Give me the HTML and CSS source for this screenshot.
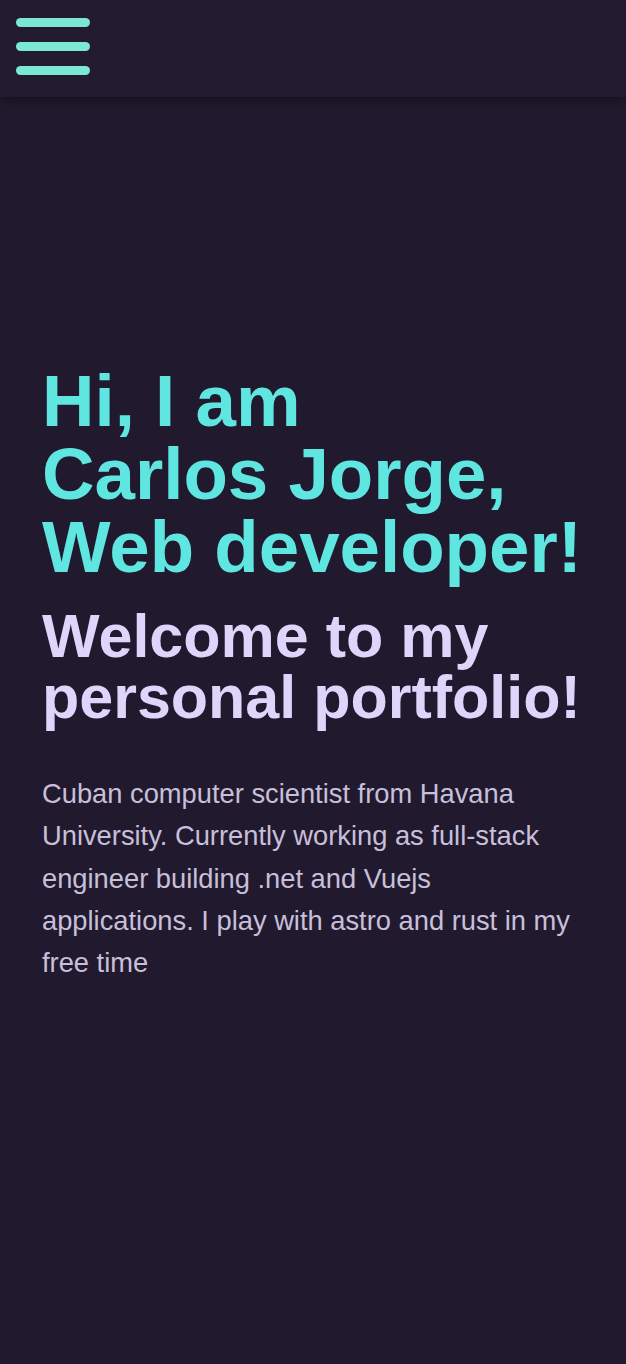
FILE: index.html
```html
<!DOCTYPE html>
<html lang="en">
<head>
<meta charset="utf-8">
<title>Carlos Jorge</title>
<link rel="stylesheet" href="styles.css">
</head>
<body>
<header class="topbar">
  <button class="menu-btn" aria-label="Menu">
    <span class="bar"></span>
    <span class="bar"></span>
    <span class="bar"></span>
  </button>
</header>
<main class="hero">
  <h1 class="title">Hi, I am<br>Carlos Jorge,<br>Web developer!</h1>
  <h2 class="subtitle">Welcome to my personal portfolio!</h2>
  <p class="bio">Cuban computer scientist from Havana University. Currently working as full-stack engineer building .net and Vuejs applications. I play with astro and rust in my free time</p>
</main>
</body>
</html>
```

FILE: styles.css
```css
* { box-sizing: border-box; }
html, body {
  margin: 0;
  padding: 0;
  background: #211a2e;
  font-family: "Liberation Sans", Arial, sans-serif;
}
body { min-height: 1364px; }
.topbar {
  height: 97px;
  background: #221a2e;
  box-shadow: 0 4px 10px rgba(0, 0, 0, 0.35);
  display: flex;
  align-items: flex-start;
  padding: 18px 0 0 16px;
  position: relative;
  z-index: 1;
}
.menu-btn {
  background: none;
  border: 0;
  padding: 0;
  display: flex;
  flex-direction: column;
  gap: 15px;
  cursor: pointer;
}
.bar {
  display: block;
  width: 74px;
  height: 9px;
  border-radius: 5px;
  background: #7ce7d7;
}
.hero {
  padding: 267px 40px 0 42px;
}
.title {
  margin: 0;
  font-size: 72.7px;
  line-height: 73px;
  font-weight: 700;
  color: #5fe6e1;
}
.subtitle {
  margin: 23px 0 0 0;
  font-size: 61px;
  line-height: 61px;
  font-weight: 700;
  color: #ded5fb;
}
.bio {
  margin: 45px 0 0 0;
  font-size: 27.3px;
  line-height: 42.25px;
  color: #c8bfda;
  max-width: 544px;
}
```
